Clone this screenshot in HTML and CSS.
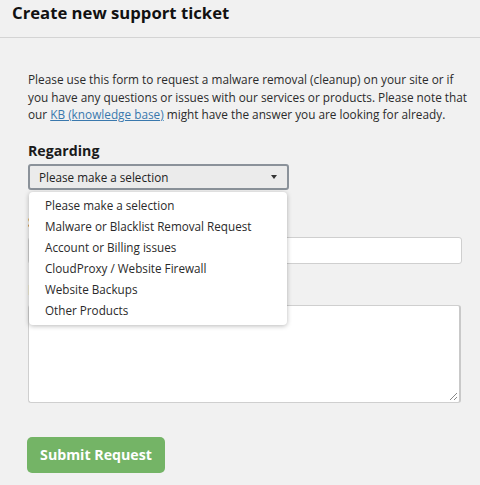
FILE: index.html
```html
<!DOCTYPE html>
<html>
<head>
<meta charset="utf-8">
<link rel="stylesheet" href="styles.css">
</head>
<body>
<header class="page-header">
  <h1 class="page-title">Create new support ticket</h1>
</header>
<main class="content">
  <p class="intro">Please use this form to request a malware removal (cleanup) on your site or if<br>you have any questions or issues with our services or products. Please note that<br>our <a class="kb-link" href="#">KB (knowledge base)</a> might have the answer you are looking for already.</p>

  <div class="field field-regarding">
    <label class="field-label">Regarding</label>
    <div class="select-wrap">
      <div class="select-box">
        <span class="select-text">Please make a selection</span>
        <span class="select-arrow"></span>
      </div>
      <ul class="dropdown">
        <li class="dropdown-item">Please make a selection</li>
        <li class="dropdown-item">Malware or Blacklist Removal Request</li>
        <li class="dropdown-item">Account or Billing issues</li>
        <li class="dropdown-item">CloudProxy / Website Firewall</li>
        <li class="dropdown-item">Website Backups</li>
        <li class="dropdown-item">Other Products</li>
      </ul>
    </div>
  </div>

  <div class="field field-subject">
    <label class="field-label">Subject</label>
    <div class="text-input"></div>
  </div>

  <div class="field field-message">
    <label class="field-label label-warn">Description</label>
    <div class="text-area"><span class="grip"></span></div>
  </div>

  <button class="submit-btn">Submit Request</button>
</main>
</body>
</html>
```

FILE: styles.css
```css
* { box-sizing: border-box; }
html, body {
  margin: 0;
  padding: 0;
  background: #f1f1f1;
  font-family: "Open Sans", "DejaVu Sans", sans-serif;
  color: #333;
}
.page-header {
  height: 38px;
  border-bottom: 1px solid #d4d4d4;
  padding-left: 12px;
}
.page-title {
  margin: 0;
  font-size: 16.7px;
  font-weight: 700;
  line-height: 26px;
  color: #111;
}
.content {
  padding: 33px 18px 0 28px;
}
.intro {
  margin: 0 -12px 0 0;
  font-size: 11.8px;
  line-height: 17.5px;
  color: #2b2b2b;
}
.kb-link {
  color: #3a78ad;
  text-decoration: underline;
}
.field {
  display: flex;
  flex-direction: column;
}
.field-label {
  font-size: 14.2px;
  font-weight: 700;
  line-height: 20px;
  color: #1a1a1a;
}
.field-regarding .field-label { margin-top: 17px; margin-bottom: 3px; }
.field-subject .field-label { margin-top: 22px; margin-bottom: 5px; }
.field-message .field-label { margin-top: 16px; margin-bottom: 5px; }
.label-warn { color: #a8651f; }
.select-wrap {
  position: relative;
  width: 261px;
}
.select-box {
  height: 26px;
  border: 2px solid #8b929a;
  border-radius: 3px;
  background: #ebebeb;
  display: flex;
  align-items: center;
  justify-content: space-between;
  padding: 0 10px 0 9px;
  font-size: 11.7px;
  color: #222;
}
.select-arrow {
  width: 0;
  height: 0;
  border-left: 3.5px solid transparent;
  border-right: 3.5px solid transparent;
  border-top: 4px solid #333;
}
.dropdown {
  position: absolute;
  top: 28px;
  left: 1px;
  width: 258px;
  height: 133px;
  margin: 0;
  padding: 3px 0 0 0;
  list-style: none;
  background: #fff;
  border-radius: 4px;
  box-shadow: 0 1px 5px rgba(0,0,0,0.28);
  z-index: 5;
}
.dropdown-item {
  font-size: 11.7px;
  line-height: 21px;
  padding-left: 16px;
  color: #2a2a2a;
}
.text-input {
  height: 27px;
  background: #fff;
  border: 1px solid #cfcfcf;
  border-radius: 3px;
}
.text-area {
  position: relative;
  height: 98px;
  width: 433px;
  background: #fff;
  border: 1px solid #cfcfcf;
  border-right: 2px solid #c9c9c9;
  border-radius: 3px;
}
.grip {
  position: absolute;
  right: 2px;
  bottom: 2px;
  width: 7px;
  height: 7px;
  background: linear-gradient(135deg, transparent 45%, #888 45%, #888 55%, transparent 55%, transparent 75%, #888 75%, #888 85%, transparent 85%);
}
.submit-btn {
  display: block;
  margin-top: 34px;
  margin-left: -1px;
  width: 138px;
  height: 36px;
  border: none;
  border-radius: 5px;
  background: #74b466;
  color: #fff;
  font-family: "Open Sans", "DejaVu Sans", sans-serif;
  font-size: 14.2px;
  font-weight: 700;
  padding: 0;
}
```
